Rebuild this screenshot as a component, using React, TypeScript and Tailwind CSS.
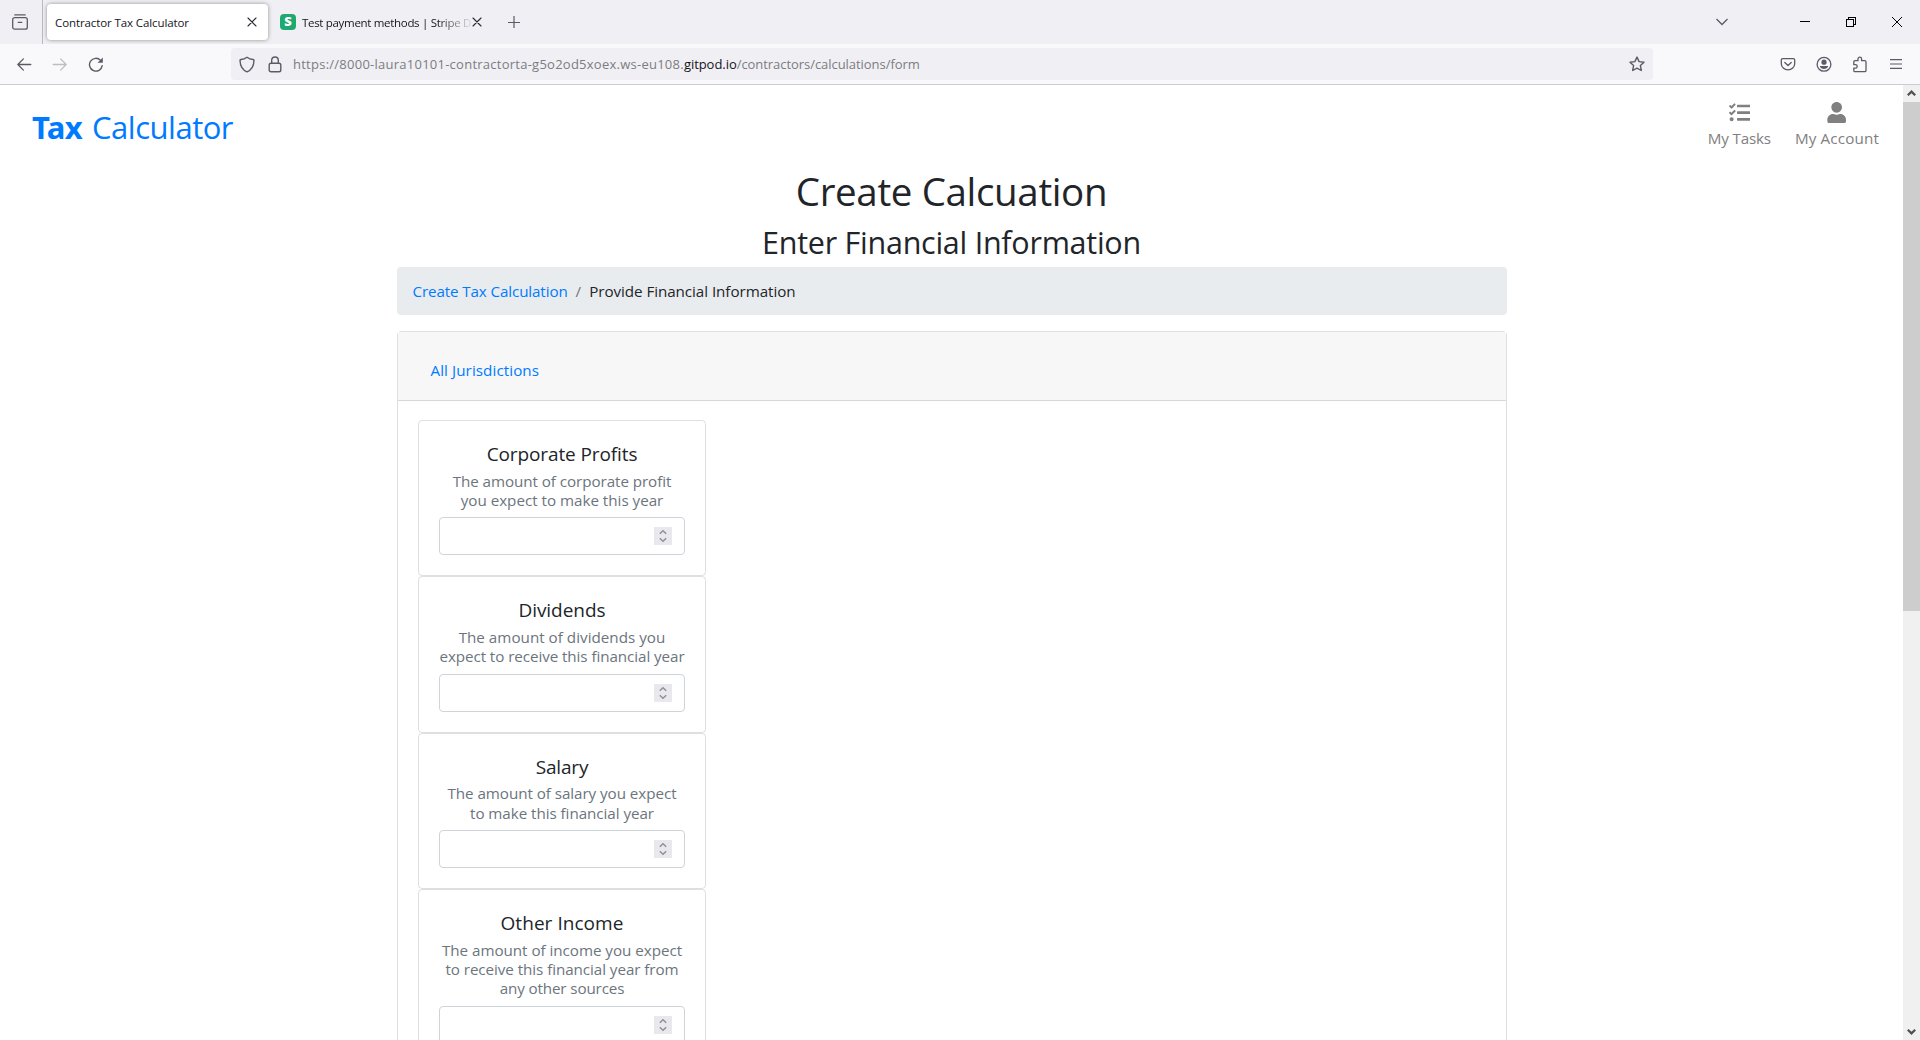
import React from 'react';
import { FaTasks, FaUser } from 'react-icons/fa';

type IconProps = { className?: string };

const ArchiveIcon = ({ className }: IconProps) => (
  <svg className={className} viewBox="0 0 16 16" width="16" height="16" fill="none" stroke="#5b5b66" strokeWidth="1.3" strokeLinecap="round">
    <path d="M2.8 0.9h10.4" />
    <rect x="0.7" y="3.7" width="14.6" height="11.5" rx="2" />
    <path d="M6.2 8.3h3.6" />
  </svg>
);

const CloseIcon = ({ className }: IconProps) => (
  <svg className={className} viewBox="0 0 10 10" width="10" height="10" fill="none" stroke="#2a2933" strokeWidth="1.1" strokeLinecap="round">
    <path d="M1 1l8 8M9 1l-8 8" />
  </svg>
);

const BackIcon = ({ className }: IconProps) => (
  <svg className={className} viewBox="0 0 16 16" width="16" height="16" fill="none" stroke="currentColor" strokeWidth="1.3" strokeLinecap="round" strokeLinejoin="round">
    <path d="M14.8 8.5H1.8M7.4 2.9L1.8 8.5 7.4 14.1" />
  </svg>
);

const ReloadIcon = () => (
  <svg viewBox="0 0 16 16" width="16" height="16" fill="none" stroke="#5b5b66" strokeWidth="1.4" strokeLinecap="round" strokeLinejoin="round">
    <path d="M14.2 9.7A6.4 6.4 0 1 1 12.6 4.4" />
    <path d="M14.8 1.5v5.2H9.600z" fill="#5b5b66" stroke="none" />
  </svg>
);

const ShieldIcon = () => (
  <svg viewBox="0 0 16 17" width="16" height="17" fill="none" stroke="#5b5b66" strokeWidth="1.4" strokeLinejoin="round">
    <path d="M8 1.2c-1.9 1.4-4 2.1-6.100 2.300-.6.1-.9.5-.9 1C1.200 10.300 3.600 14 8 15.900c4.400-1.900 6.800-5.600 7-11.400 0-.5-.3-.9-.9-1C12 3.300 9.900 2.600 8 1.200z" />
  </svg>
);

const LockIcon = () => (
  <svg viewBox="0 0 14 17" width="14" height="17" fill="none" stroke="#5b5b66" strokeWidth="1.4">
    <rect x="1.200" y="7.200" width="11.600" height="8.600" rx="1.800" />
    <path d="M3.700 7.200V4.300a3.300 3.300 0 0 1 6.600 0v2.900" />
  </svg>
);

const StarIcon = () => (
  <svg viewBox="0 0 16 16" width="16" height="16" fill="none" stroke="#5b5b66" strokeWidth="1.4" strokeLinejoin="round">
    <path d="M8 1.100l2.100 4.500 4.900.6-3.600 3.400.9 4.900L8 12.100l-4.300 2.400.9-4.900L1 6.200l4.900-.6z" />
  </svg>
);

const PocketIcon = () => (
  <svg viewBox="0 0 16 16" width="16" height="16" fill="none" stroke="#5b5b66" strokeWidth="1.3" strokeLinecap="round" strokeLinejoin="round">
    <path d="M2.700 2.600h10.600c.8 0 1.400.6 1.400 1.400v3.700a6.700 6.100 0 0 1-13.400 0V4c0-.8.6-1.400 1.400-1.400z" />
    <path d="M4.800 6.500L8 9.500l3.200-3" />
  </svg>
);

const AccountIcon = () => (
  <svg viewBox="0 0 16 16" width="16" height="16" fill="none">
    <circle cx="8" cy="8.300" r="6.900" stroke="#5b5b66" strokeWidth="1.300" />
    <circle cx="8" cy="6.200" r="2.600" fill="#5b5b66" />
    <path d="M3.800 10h8.400c-.3 1.900-2.100 3-4.200 3s-3.900-1.100-4.200-3z" fill="#5b5b66" />
  </svg>
);

const PuzzleIcon = () => (
  <svg viewBox="0 0 16 17" width="16" height="17" fill="none" stroke="#5b5b66" strokeWidth="1.300" strokeLinejoin="round">
    <path d="M1.800 7.100V5.900c0-.7.5-1.200 1.200-1.200h3V3a1.800 1.800 0 0 1 3.600 0v1.700h3.200c.7 0 1.200.5 1.200 1.200v8.500c0 .7-.5 1.200-1.200 1.200H3c-.7 0-1.200-.5-1.200-1.200v-2.300h1.700a1.700 1.700 0 0 0 0-3.400H1.800z" />
  </svg>
);

const Spinner = () => (
  <span className="flex h-[18px] w-[18px] items-center justify-center bg-[#e9e9ed]">
    <svg viewBox="0 0 18 18" width="18" height="18" fill="none" stroke="#8f8f9d" strokeWidth="1.500">
      <path d="M5.800 6.700L9 3.700l3.200 3M5.800 11.300l3.200 3 3.200-3" />
    </svg>
  </span>
);

type Line = { text: string; track: string };
type Field = { title: Line; lines: Line[] };

const fields: Field[] = [
  {
    title: { text: 'Corporate Profits', track: 'tracking-[-0.11px]' },
    lines: [
      { text: 'The amount of corporate profit', track: 'tracking-[-0.06px]' },
      { text: 'you expect to make this year', track: 'tracking-[-0.01px]' },
    ],
  },
  {
    title: { text: 'Dividends', track: 'tracking-[-0.03px]' },
    lines: [
      { text: 'The amount of dividends you', track: 'tracking-[0.02px]' },
      { text: 'expect to receive this financial year', track: 'tracking-[-0.07px]' },
    ],
  },
  {
    title: { text: 'Salary', track: 'tracking-[-0.18px]' },
    lines: [
      { text: 'The amount of salary you expect', track: 'tracking-[-0.05px]' },
      { text: 'to make this financial year', track: 'tracking-[-0.05px]' },
    ],
  },
  {
    title: { text: 'Other Income', track: 'tracking-[0.05px]' },
    lines: [
      { text: 'The amount of income you expect', track: 'tracking-[-0.03px]' },
      { text: 'to receive this financial year from', track: 'tracking-[-0.06px]' },
      { text: 'any other sources', track: 'tracking-[-0.12px]' },
    ],
  },
];

function FieldCard({ field }: { field: Field }) {
  return (
    <div className="w-[288px] shrink-0 rounded border border-black/[0.125] px-5 pb-5 pt-[21px] text-center">
      <h5 className={`text-[19px] leading-6 text-[#212529] ${field.title.track}`}>{field.title.text}</h5>
      <div className="mb-[7.400px] mt-[5.600px] text-[15.2px] leading-[19.2px] text-[#6c757d]">
        {field.lines.map((line) => (
          <div key={line.text} className={`flex justify-center whitespace-nowrap ${line.track}`}>
            {line.text}
          </div>
        ))}
      </div>
      <div className="flex h-[38px] items-center justify-end rounded border border-[#ced4da] pr-3">
        <Spinner />
      </div>
    </div>
  );
}

function TabStrip() {
  return (
    <div className="flex h-11 shrink-0 items-center bg-[#f0f0f4]">
      <div className="flex h-full w-[43px] items-center border-r border-[#b9b9c2] pl-3">
        <ArchiveIcon />
      </div>
      <div className="ml-1 flex h-9 w-[221px] items-center justify-between rounded bg-white pl-2 pr-[11px] shadow-[0_0_4px_rgba(0,0,0,0.4)]">
        <span className="pt-px text-[11.5px] tracking-[-0.1px] text-[#15141a]">Contractor Tax Calculator</span>
        <CloseIcon />
      </div>
      <div className="ml-3 flex w-[202px] items-center">
        <span className="flex h-4 w-4 shrink-0 items-center justify-center rounded-sm bg-[#1fa971] text-[13px] font-extrabold text-white">S</span>
        <span className="ml-[6px] w-[170px] overflow-hidden whitespace-nowrap pt-px text-[11.5px] tracking-[-0.31px] text-[#15141a] [mask-image:linear-gradient(to_right,black_135px,transparent_172px)]">
          Test payment methods | Stripe D
        </span>
        <CloseIcon className="shrink-0" />
      </div>
      <svg className="ml-[26px]" viewBox="0 0 12 12" width="12" height="12" stroke="#5b5b66" strokeWidth="1.200">
        <path d="M6 0v12M0 6.500h12" />
      </svg>
      <div className="ml-auto flex items-center">
        <svg className="mr-[72px]" viewBox="0 0 12 8" width="12" height="8" fill="none" stroke="#5b5b66" strokeWidth="1.300">
          <path d="M0.500 1l5.500 5.500L11.500 1" />
        </svg>
        <svg className="mr-9" viewBox="0 0 10 10" width="10" height="10" stroke="#000" shapeRendering="crispEdges">
          <path d="M0 4.500h10" />
        </svg>
        <svg className="mr-9" viewBox="0 0 10 10" width="10" height="10" fill="none" stroke="#000" shapeRendering="crispEdges">
          <path d="M0.500 2.500h7v7h-7zM2.500 2.500v-2h7v7h-2" />
        </svg>
        <svg className="mr-[18px]" viewBox="0 0 10 10" width="10" height="10" stroke="#000" strokeWidth="1">
          <path d="M0 0l10 10M10 0L0 10" />
        </svg>
      </div>
    </div>
  );
}

function AddressBar() {
  return (
    <div className="flex h-[41px] shrink-0 items-center border-b border-[#cccccf] bg-[#f9f9fb]">
      <div className="flex w-[231px] items-center gap-5 pl-4">
        <BackIcon className="text-[#5b5b66]" />
        <BackIcon className="-scale-x-100 text-[#bdbdc3]" />
        <ReloadIcon />
      </div>
      <div className="flex h-8 w-[1422px] items-center rounded bg-[#f0f0f4] pl-2 pr-2">
        <ShieldIcon />
        <div className="ml-[13px]"><LockIcon /></div>
        <div className="ml-[11px] flex whitespace-nowrap pt-[2px] text-[13px] text-[#7c7c82]">
          <span className="tracking-[0.25px]">https://8000-laura10101-contractorta-g5o2od5xoex.ws-eu108.</span>
          <span className="tracking-[-0.05px] text-[#15141a]">gitpod.io</span>
          <span className="tracking-[-0.05px]">/contractors/calculations/form</span>
        </div>
        <div className="ml-auto"><StarIcon /></div>
      </div>
      <div className="ml-auto flex items-center gap-5 pr-[18px]">
        <PocketIcon />
        <AccountIcon />
        <PuzzleIcon />
        <svg className="ml-[2px]" viewBox="0 0 12 10" width="12" height="10" stroke="#5b5b66" strokeWidth="1.200">
          <path d="M0 0.600h12M0 5h12M0 9.400h12" />
        </svg>
      </div>
    </div>
  );
}

function ScrollBar() {
  return (
    <div className="flex w-[17px] shrink-0 flex-col items-center bg-[#f0f0f0]">
      <svg viewBox="0 0 17 17" width="17" height="17" fill="none" stroke="#505050" strokeWidth="2.200">
        <path d="M4.800 10.300l3.700-3.700 3.700 3.700" />
      </svg>
      <div className="h-[509px] w-full bg-[#cdcdcd]" />
      <svg className="mt-auto" viewBox="0 0 17 17" width="17" height="17" fill="none" stroke="#505050" strokeWidth="2.200">
        <path d="M4.800 6.700l3.700 3.700 3.700-3.700" />
      </svg>
    </div>
  );
}

export default function App() {
  return (
    <div className="flex h-[1040px] w-[1920px] flex-col overflow-hidden bg-white font-['Open_Sans','Noto_Sans',sans-serif]">
      <TabStrip />
      <AddressBar />
      <div className="flex min-h-0 flex-1">
        <main className="flex min-w-0 flex-1 flex-col overflow-hidden">
          <header className="flex h-[81.600px] shrink-0 items-start justify-between pl-8 pr-6">
            <div className="flex pt-[18px] text-[31px] leading-[48px] text-[#007bff]">
              <span className="w-[60px] font-['Noto_Sans',sans-serif] font-bold tracking-[-0.600px]">Tax</span>
              <span className="tracking-[-0.480px]">Calculator</span>
            </div>
            <nav className="flex gap-6 pt-[17px] text-[15.200px] leading-6 text-[#808080]">
              <div className="flex flex-col items-center">
                <FaTasks size={21.33} />
                <span className="mt-[3px] tracking-[-0.180px]">My Tasks</span>
              </div>
              <div className="flex flex-col items-center">
                <FaUser size={21.33} />
                <span className="mt-[3px] tracking-[0.155px]">My Account</span>
              </div>
            </nav>
          </header>
          <section className="mx-auto flex w-[1110px] flex-col">
            <h1 className="mb-2 text-center text-[38.500px] leading-[48px] tracking-[-0.350px] text-[#212529]">Create Calcuation</h1>
            <h2 className="mb-[6px] text-center text-[30.500px] leading-[38.400px] tracking-[-0.260px] text-[#212529]">Enter Financial Information</h2>
            <div className="mb-4 flex h-12 shrink-0 items-center rounded bg-[#e9ecef] px-4 pt-px text-[15.200px] text-[#212529]">
              <span className="tracking-[-0.120px] text-[#007bff]">Create Tax Calculation</span>
              <span className="px-2 text-[#6c757d]">/</span>
              <span className="tracking-[-0.055px]">Provide Financial Information</span>
            </div>
            <div className="flex flex-col rounded border border-black/[0.125]">
              <div className="flex h-[69px] items-center border-b border-black/[0.125] bg-[#f7f7f7] pl-[33px] pt-[8px] text-[15.200px] tracking-[0.080px] text-[#007bff]">
                All Jurisdictions
              </div>
              <div className="flex flex-col pl-[20.500px] pt-[19px]">
                {fields.map((field) => (
                  <FieldCard key={field.title.text} field={field} />
                ))}
              </div>
            </div>
          </section>
        </main>
        <ScrollBar />
      </div>
    </div>
  );
}
